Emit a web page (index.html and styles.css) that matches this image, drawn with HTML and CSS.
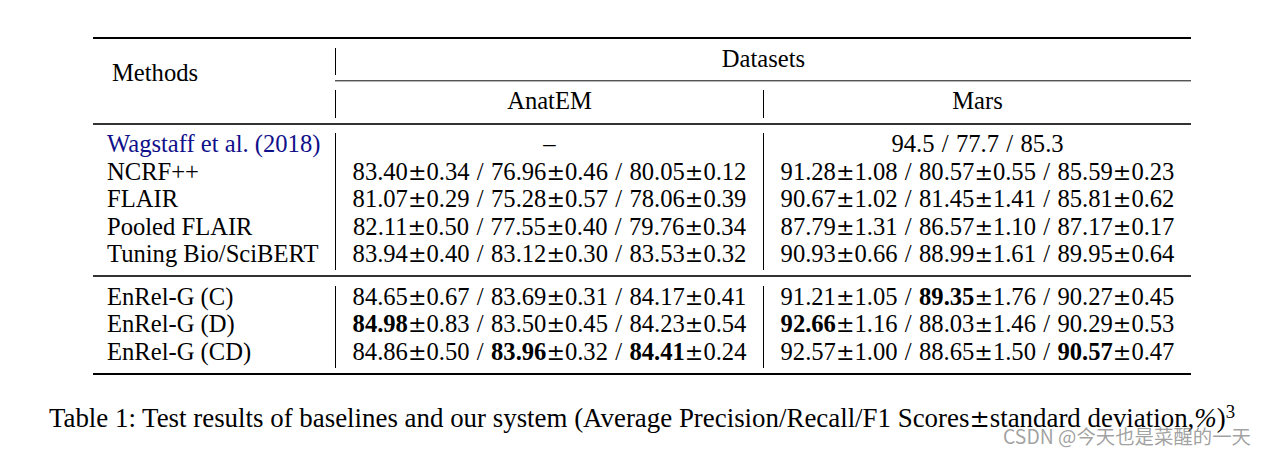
FILE: index.html
```html
<!DOCTYPE html>
<html>
<head>
<meta charset="utf-8">
<link rel="stylesheet" href="styles.css">
</head>
<body>
<div class="page">
  <div class="table">
    <div class="rule thick"></div>
    <div class="head">
      <div class="methods">Methods</div>
      <div class="c m span2">Datasets</div>
      <div class="cmid"></div>
      <div class="c m row3">AnatEM</div>
      <div class="c m row3">Mars</div>
    </div>
    <div class="rule mid"></div>
    <div class="block">
      <div class="c l cite">Wagstaff et al. (2018)</div>
      <div class="c m">–</div>
      <div class="c m num">94.5 / 77.7 / 85.3</div>

      <div class="c l">NCRF++</div>
      <div class="c m num">83.40<span class="pm">±</span>0.34 / 76.96<span class="pm">±</span>0.46 / 80.05<span class="pm">±</span>0.12</div>
      <div class="c m num">91.28<span class="pm">±</span>1.08 / 80.57<span class="pm">±</span>0.55 / 85.59<span class="pm">±</span>0.23</div>

      <div class="c l">FLAIR</div>
      <div class="c m num">81.07<span class="pm">±</span>0.29 / 75.28<span class="pm">±</span>0.57 / 78.06<span class="pm">±</span>0.39</div>
      <div class="c m num">90.67<span class="pm">±</span>1.02 / 81.45<span class="pm">±</span>1.41 / 85.81<span class="pm">±</span>0.62</div>

      <div class="c l">Pooled FLAIR</div>
      <div class="c m num">82.11<span class="pm">±</span>0.50 / 77.55<span class="pm">±</span>0.40 / 79.76<span class="pm">±</span>0.34</div>
      <div class="c m num">87.79<span class="pm">±</span>1.31 / 86.57<span class="pm">±</span>1.10 / 87.17<span class="pm">±</span>0.17</div>

      <div class="c l">Tuning Bio/SciBERT</div>
      <div class="c m num">83.94<span class="pm">±</span>0.40 / 83.12<span class="pm">±</span>0.30 / 83.53<span class="pm">±</span>0.32</div>
      <div class="c m num">90.93<span class="pm">±</span>0.66 / 88.99<span class="pm">±</span>1.61 / 89.95<span class="pm">±</span>0.64</div>
    </div>
    <div class="rule mid"></div>
    <div class="block">
      <div class="c l">EnRel-G (C)</div>
      <div class="c m num">84.65<span class="pm">±</span>0.67 / 83.69<span class="pm">±</span>0.31 / 84.17<span class="pm">±</span>0.41</div>
      <div class="c m num">91.21<span class="pm">±</span>1.05 / <b>89.35</b><span class="pm">±</span>1.76 / 90.27<span class="pm">±</span>0.45</div>

      <div class="c l">EnRel-G (D)</div>
      <div class="c m num"><b>84.98</b><span class="pm">±</span>0.83 / 83.50<span class="pm">±</span>0.45 / 84.23<span class="pm">±</span>0.54</div>
      <div class="c m num"><b>92.66</b><span class="pm">±</span>1.16 / 88.03<span class="pm">±</span>1.46 / 90.29<span class="pm">±</span>0.53</div>

      <div class="c l">EnRel-G (CD)</div>
      <div class="c m num">84.86<span class="pm">±</span>0.50 / <b>83.96</b><span class="pm">±</span>0.32 / <b>84.41</b><span class="pm">±</span>0.24</div>
      <div class="c m num">92.57<span class="pm">±</span>1.00 / 88.65<span class="pm">±</span>1.50 / <b>90.57</b><span class="pm">±</span>0.47</div>
    </div>
    <div class="rule thick"></div>
    <div class="caption"><span>Table 1: Test results of baselines and our system (Average Precision/Recall/F1 Scores<span class="pm">±</span>standard deviation,<i>%</i>)<sup>3</sup></span></div>
  </div>
  <div class="watermark">CSDN @今天也是菜醒的一天</div>
</div>
</body>
</html>
```
FILE: styles.css
```css
html, body {
  margin: 0;
  padding: 0;
  background: #fff;
}
body {
  font-family: "Liberation Serif", "Times New Roman", serif;
  color: #000;
}
.page {
  position: relative;
  width: 1270px;
  height: 455px;
  overflow: hidden;
  padding: 37px 0 0 93px;
  box-sizing: border-box;
}
.table {
  width: 1098px;
  font-size: 24.6px;
}
.rule.thick {
  height: 2px;
  background: #000;
}
.rule.mid {
  height: 2px;
  background: #333;
}
.head {
  display: grid;
  grid-template-columns: 242px 428px 428px;
  grid-template-rows: 27.4px 15px 27.4px;
  padding: 9px 0 5.2px;
}
.block {
  display: grid;
  grid-template-columns: 242px 428px 428px;
  grid-auto-rows: 27.4px;
  padding: 8.4px 0 5px;
}
.block + .rule.mid + .block {
  padding-top: 8.7px;
}
.methods {
  grid-column: 1;
  grid-row: 1 / 4;
  padding: 13.8px 0 0 19px;
  line-height: 21.8px;
}
.c {
  height: 27.4px;
  line-height: 21.8px;
  white-space: nowrap;
  box-sizing: border-box;
}
.c.l {
  padding-left: 14px;
}
.c.m {
  text-align: center;
  border-left: 1px solid #000;
}
.span2 {
  grid-column: 2 / 4;
  grid-row: 1;
}
.row3 {
  grid-row: 3;
}
.cmid {
  grid-column: 2 / 4;
  grid-row: 2;
  margin-top: 5px;
  height: 1px;
  background: #555;
  box-shadow: 0 1px 0 #b5b5b5;
}
.cite {
  color: #10108a;
}
.num {
  word-spacing: 1.2px;
}
.pm {
  font-family: "DejaVu Serif", serif;
  font-size: 0.9em;
  line-height: 0;
}
b {
  font-weight: bold;
}
.caption {
  margin-top: 28px;
  display: flex;
  justify-content: center;
  font-size: 26.9px;
  line-height: 30px;
  white-space: nowrap;
}
.caption sup {
  font-size: 0.7em;
  vertical-align: 0.5em;
  line-height: 0;
}
.watermark {
  position: absolute;
  left: 1003px;
  top: 424px;
  font-family: "Noto Sans CJK SC", "Noto Sans", sans-serif;
  font-size: 19.4px;
  line-height: 24px;
  color: rgba(120, 120, 120, 0.7);
  white-space: nowrap;
}
```
